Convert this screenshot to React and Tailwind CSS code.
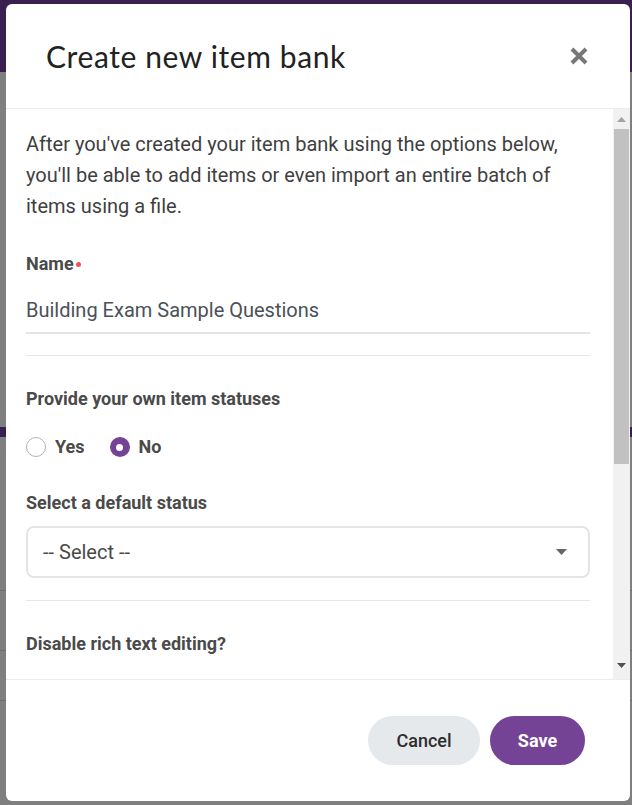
import React, { useState } from 'react';

const font = { fontFamily: 'Roboto, "Liberation Sans", sans-serif' };

const Radio = ({ checked, label, onClick }) => (
    <button type="button" onClick={onClick} className="flex items-center gap-[9px] cursor-pointer">
        {checked ? (
            <span className="w-[20px] h-[20px] rounded-full bg-[#744396] flex items-center justify-center">
                <span className="w-[7px] h-[7px] rounded-full bg-white" />
            </span>
        ) : (
            <span className="w-[20px] h-[20px] rounded-full border border-[#aab4c0] bg-white" />
        )}
        <span className="text-[18px] leading-[24px] font-bold text-[#4a4a4a]">{label}</span>
    </button>
);

const App = () => {
    const [ownStatuses, setOwnStatuses] = useState(false);

    return (
        <div className="relative w-full h-[805px] overflow-hidden bg-[#7f7f7f]" style={font}>
            {/* Page behind the overlay */}
            <div className="flex flex-col">
                <div className="h-[72px] bg-[#3a2050]" />
                <div className="h-[355px]" />
                <div className="h-[10px] bg-[#3a2050]" />
                <div className="h-[153px]" />
                <div className="h-px bg-[#6f6f6f]" />
                <div className="h-[59px]" />
                <div className="h-px bg-[#6f6f6f]" />
                <div className="h-[49px]" />
                <div className="h-px bg-[#6f6f6f]" />
            </div>

            {/* Modal */}
            <div className="absolute top-[4px] left-[6px] w-[624px] h-[797px] bg-white rounded-[6px] flex flex-col overflow-hidden">
                {/* Header */}
                <header className="h-[105px] shrink-0 flex items-center justify-between pl-[40px] pr-[41px] border-b border-[#ececec]">
                    <h1 className="text-[30px] text-[#222222] font-normal tracking-[0.6px]" style={{ fontFamily: 'Lato, "Open Sans", sans-serif' }}>
                        Create new item bank
                    </h1>
                    <button type="button" className="w-[20px] h-[20px] flex items-center justify-center">
                        <svg width="20" height="20" viewBox="0 0 20 20">
                            <path d="M3 3 L17 17 M17 3 L3 17" stroke="#777777" strokeWidth="4" />
                        </svg>
                    </button>
                </header>

                {/* Body */}
                <div className="h-[571px] shrink-0 flex border-b border-[#ececec]">
                    <div className="flex-1 overflow-hidden pl-[20px] pr-[23px] pt-[20px]">
                        <p className="text-[20px] leading-[31px] text-[#3f3f3f]">
                            After you've created your item bank using the options below, you'll be able to add items or even import an entire batch of items using a file.
                        </p>

                        <div className="mt-[30px] flex items-center text-[18px] leading-[24px] font-bold text-[#4a4a4a]">
                            Name
                            <span className="ml-[2px] w-[5px] h-[5px] rounded-full bg-[#f05252]" />
                        </div>
                        <div className="mt-[11px] pt-[8px] pb-[7px] border-b-2 border-[#e4e4e4] text-[20px] leading-[30px] text-[#4b5159]">
                            Building Exam Sample Questions
                        </div>

                        <div className="mt-[21px] h-px bg-[#e6e6e6]" />

                        <div className="mt-[31px] text-[18px] leading-[24px] font-bold text-[#4a4a4a]">
                            Provide your own item statuses
                        </div>
                        <div className="mt-[24px] flex items-center gap-[25px]">
                            <Radio checked={ownStatuses} label="Yes" onClick={() => setOwnStatuses(true)} />
                            <Radio checked={!ownStatuses} label="No" onClick={() => setOwnStatuses(false)} />
                        </div>

                        <div className="mt-[32px] text-[18px] leading-[24px] font-bold text-[#4a4a4a]">
                            Select a default status
                        </div>
                        <div className="mt-[11px] h-[52px] border-2 border-[#e4e4e4] rounded-[8px] flex items-center justify-between pl-[15px] pr-[21px]">
                            <span className="text-[20px] text-[#4a4a4a]">-- Select --</span>
                            <svg width="11" height="6" viewBox="0 0 11 6">
                                <path d="M0 0 L11 0 L5.5 6 Z" fill="#666666" />
                            </svg>
                        </div>

                        <div className="mt-[22px] h-px bg-[#e6e6e6]" />

                        <div className="mt-[31px] text-[18px] leading-[24px] font-bold text-[#4a4a4a]">
                            Disable rich text editing?
                        </div>
                    </div>

                    {/* Scrollbar */}
                    <div className="w-[17px] shrink-0 bg-[#f1f1f1] flex flex-col">
                        <div className="h-[20px] flex items-center justify-center">
                            <svg width="9" height="5" viewBox="0 0 9 5">
                                <path d="M0 5 L9 5 L4.5 0 Z" fill="#a3a3a3" />
                            </svg>
                        </div>
                        <div className="h-[335px] mx-[1px] bg-[#c1c1c1]" />
                        <div className="flex-1" />
                        <div className="h-[20px] flex items-center justify-center mb-[4px]">
                            <svg width="9" height="5" viewBox="0 0 9 5">
                                <path d="M0 0 L9 0 L4.5 5 Z" fill="#505050" />
                            </svg>
                        </div>
                    </div>
                </div>

                {/* Footer */}
                <footer className="flex-1 flex items-center justify-end gap-[10px] pr-[45px]">
                    <button type="button" className="w-[112px] h-[49px] rounded-full bg-[#e6e9ec] text-[18px] font-medium text-[#2d2d2d]">
                        Cancel
                    </button>
                    <button type="button" className="w-[95px] h-[49px] rounded-full bg-[#744396] text-[18px] font-bold text-white">
                        Save
                    </button>
                </footer>
            </div>
        </div>
    );
};

export default App;
